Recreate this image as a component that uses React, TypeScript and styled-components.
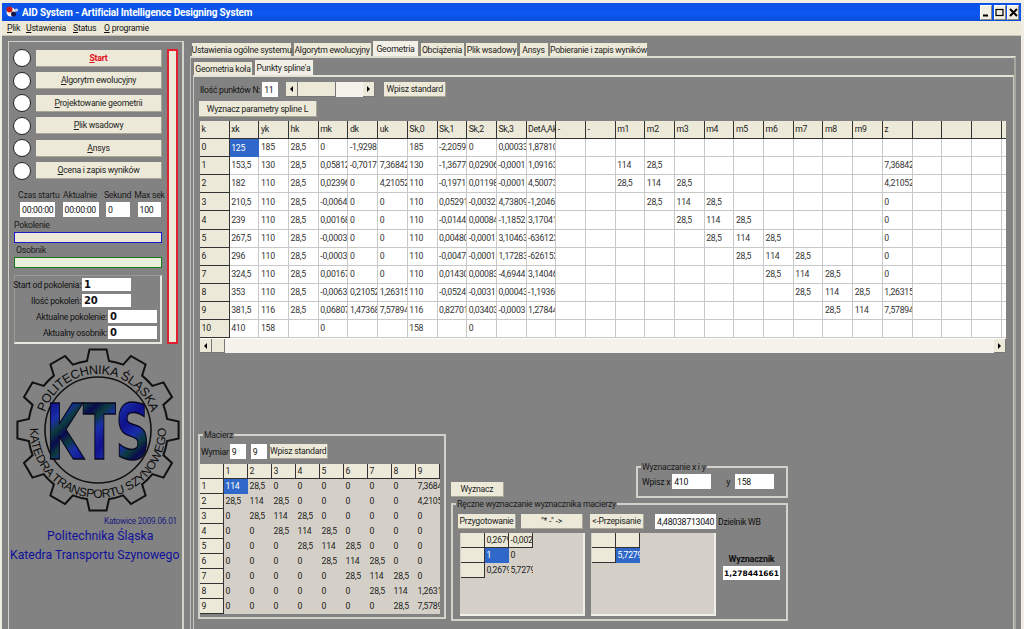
import React from "react";
import styled, { createGlobalStyle } from "styled-components";

const Global = createGlobalStyle`
  html, body { margin: 0; padding: 0; width: 1024px; height: 629px; overflow: hidden; background: #828282; }
  * { box-sizing: border-box; }
  body { font-family: Roboto, "Liberation Sans", Arial, sans-serif; font-size: 8.7px; letter-spacing: -0.25px; color: #111; }
`;

const BEIGE = "#ece9d8";
const GRAY = "#828282";
const LINE = "#d2d2ca";

const Win = styled.div`
  width: 1024px; height: 629px; display: flex; flex-direction: column;
  background: ${GRAY}; border: solid #f0eee4; border-width: 3px 3px 0 2px; overflow: hidden;
`;
const TitleBar = styled.div`
  height: 18px; flex: none; display: flex; align-items: center; padding: 0 2px 0 3px;
  background: linear-gradient(#0a50e6, #0c58f0 60%, #0a4cd8); color: #fff;
`;
const TitleText = styled.div`
  margin-left: 3px; font-size: 10px; font-weight: bold; flex: 1; white-space: nowrap; letter-spacing: -0.16px;
`;
const WinBtn = styled.div`
  width: 12px; height: 15px; margin-left: 1.5px; background: #f1eee2; border: 1px solid #fff;
  border-right-color: #8b8b80; border-bottom-color: #8b8b80;
  display: flex; align-items: center; justify-content: center; color: #000;
`;
const MenuBar = styled.div`
  height: 15px; flex: none; background: ${BEIGE}; display: flex; align-items: center; padding-left: 5px;
  border-bottom: 1px solid #c8c5b6;
`;
const MenuItem = styled.div<{ $w: number }>`
  width: ${(p) => p.$w}px; white-space: nowrap;
`;
const Body = styled.div`
  flex: 1; min-height: 0; display: flex; padding: 5px 0 0 6px;
`;

const Left = styled.div`
  width: 176px; height: 590px; flex: none; border: 1px solid ${LINE}; border-bottom: none; border-right-width: 2px;
  padding: 7px 0 0 4px;
`;
const LeftTop = styled.div`
  display: flex; align-items: flex-start; gap: 5px;
`;
const LeftCol = styled.div`
  width: 149px; display: flex; flex-direction: column;
`;
const Steps = styled.div`
  display: flex; flex-direction: column; gap: 4.5px;
`;
const Step = styled.div`
  display: flex; align-items: center; gap: 5px;
`;
const Lamp = styled.div`
  width: 18px; height: 18px; border-radius: 50%; background: #fff; border: 1.5px solid #222; flex: none;
`;
const StepBtn = styled.div<{ $red?: boolean }>`
  width: 126px; height: 17px; display: flex; align-items: center; justify-content: center;
  background: ${BEIGE}; border-right: 1px solid #a9a698; border-bottom: 1px solid #a9a698;
  color: ${(p) => (p.$red ? "#e01020" : "#222")}; font-weight: ${(p) => (p.$red ? "bold" : "normal")};
`;
const RedBar = styled.div`
  width: 11px; height: 295px; background: #ece9d8; border: 2px solid #e02030; flex: none;
`;
const TimeLabels = styled.div`
  display: flex; margin: 10.5px 0 0 5px; line-height: 10px; color: #1a1a1a;
`;
const TimeLabel = styled.div<{ $w: number }>`
  width: ${(p) => p.$w}px; white-space: nowrap; text-align: center; flex: none;
`;
const TimeFields = styled.div`
  display: flex; margin: 2px 0 0 7px; gap: 7.5px;
`;
const Field = styled.div<{ $w: number; $h?: number; $bold?: boolean }>`
  width: ${(p) => p.$w}px; height: ${(p) => p.$h ?? 15}px; background: #fff; flex: none; overflow: hidden; white-space: nowrap;
  padding: 0 0 0 2px; display: flex; align-items: center; font-size: ${(p) => (p.$bold ? 10 : 8.7)}px;
  font-weight: ${(p) => (p.$bold ? "bold" : "normal")};
  font-family: ${(p) => (p.$bold ? '"DejaVu Sans", sans-serif' : "inherit")};
`;
const SmallLabel = styled.div<{ $l: number; $t: number }>`
  margin: ${(p) => p.$t}px 0 0 ${(p) => p.$l}px; line-height: 10px; color: #1a1a1a;
`;
const Progress = styled.div<{ $c: string; $bg: string }>`
  width: 148px; height: 11px; margin: 2px 0 0 1px; border: 1.5px solid ${(p) => p.$c}; background: ${(p) => p.$bg}; flex: none;
`;
const StatBox = styled.div`
  width: 148px; height: 69px; margin: 7px 0 0 1px; border: 1px solid #9a9a94; border-right: 2px solid #e8e8e0; border-bottom: 2px solid #e8e8e0;
  display: grid; grid-template-columns: minmax(0, 1fr); padding: 2px 0 0 0; row-gap: 3px; align-content: start; flex: none;
`;
const StatRow = styled.div<{ $r: number }>`
  display: flex; justify-content: flex-end; align-items: center; gap: 1px; padding-right: ${(p) => p.$r}px; height: 13px; white-space: nowrap;
`;
const LogoWrap = styled.div`
  margin: 0 0 0 -4px; height: 172px;
`;
const DateLine = styled.div`
  margin: 0 5px 0 0; text-align: right; color: #1a1a80; font-size: 8.3px; line-height: 10px;
`;
const BigLine = styled.div<{ $t: number; $l: number; $fs: number }>`
  margin: ${(p) => p.$t}px 0 0 ${(p) => p.$l}px; color: #10109a; font-size: ${(p) => p.$fs}px; line-height: 14px; white-space: nowrap; letter-spacing: 0;
`;

const Right = styled.div`
  margin: 1px 0 0 6px; width: 826px; display: flex; flex-direction: column;
`;
const TabBar = styled.div<{ $pl: number; $h: number }>`
  display: flex; gap: 1.5px; padding-left: ${(p) => p.$pl}px; height: ${(p) => p.$h}px; align-items: flex-end; flex: none;
`;
const Tab = styled.div<{ $w: number; $on?: boolean }>`
  width: ${(p) => p.$w}px; height: ${(p) => (p.$on ? 15 : 13)}px; background: ${(p) => (p.$on ? "#f2f0e6" : BEIGE)};
  border-right: 1px solid #8c8a7c; display: flex; align-items: center; justify-content: center; white-space: nowrap; color: #222; flex: none;
`;
const TabPanel = styled.div`
  flex: 1; border: 1px solid #c0c0b8; border-bottom: none; border-right: 2px solid #a8a8a0; padding: 0 0 0 2px;
  border-top: 2px solid #dedcd0;
`;
const SubPanel = styled.div`
  height: 555px; width: 821px; border: 1px solid #c8c8c0; border-top: 2px solid #e4e2d6; border-bottom: none; padding: 4px 0 0 4px;
`;
const Controls = styled.div`
  display: flex; align-items: center; height: 17px; margin-left: 2px;
`;
const Scroll = styled.div<{ $w: number; $h: number }>`
  display: flex; width: ${(p) => p.$w}px; height: ${(p) => p.$h}px; background: #f4f2ea; flex: none; justify-content: space-between;
`;
const ScrollBtn = styled.div`
  width: 12px; height: 100%; background: ${BEIGE}; border-right: 1px solid #777; border-bottom: 1px solid #777; display: flex; align-items: center; justify-content: center; flex: none;
`;
const Arrow = styled.div<{ $left?: boolean }>`
  width: 0; height: 0; border-top: 3px solid transparent; border-bottom: 3px solid transparent;
  ${(p) => (p.$left ? "border-right: 3px solid #000;" : "border-left: 3px solid #000;")}
`;
const Thumb = styled.div<{ $w: number }>`
  width: ${(p) => p.$w}px; height: 100%; background: ${BEIGE}; border-right: 1px solid #777; border-bottom: 1px solid #777; flex: none;
`;
const ThumbGroup = styled.div`
  display: flex; flex: 1; height: 100%;
`;
const Btn = styled.div<{ $w: number; $h?: number; $mb?: number }>`
  width: ${(p) => p.$w}px; height: ${(p) => p.$h ?? 15}px; background: ${BEIGE}; border-right: 1px solid #a9a698; border-bottom: 1px solid #a9a698;
  margin-bottom: ${(p) => p.$mb ?? 0}px;
  display: flex; align-items: center; justify-content: center; white-space: nowrap; flex: none; color: #222;
`;
const Spacer = styled.div<{ $w: number }>`
  width: ${(p) => p.$w}px; flex: none;
`;
const BtnRow = styled.div`
  margin: 3px 0 4px 1px;
`;
const SheetWrap = styled.div<{ $w: number }>`
  width: ${(p) => p.$w}px; margin-left: 2px; overflow: hidden; background: #fff; height: 218px;
`;
const Sheet = styled.div<{ $cols: number; $cw: number; $rh: number; $mt?: number; $bg?: string }>`
  display: grid; grid-template-columns: repeat(${(p) => p.$cols}, ${(p) => p.$cw}px); grid-auto-rows: ${(p) => p.$rh}px;
  line-height: 1; width: max-content; margin-top: ${(p) => p.$mt ?? 0}px; background: ${(p) => p.$bg ?? "transparent"};
`;
const Cell = styled.div<{ $k: "head" | "white" | "gray" | "sel" }>`
  overflow: hidden; white-space: nowrap; padding: 0 0 0 1.5px; display: flex; align-items: center;
  ${(p) =>
    p.$k === "head"
      ? `background:${BEIGE}; border-right:1px solid #333; border-bottom:1px solid #333; color:#222;`
      : p.$k === "white"
      ? "background:#fff; border-right:1px solid #c8c8c8; border-bottom:1px solid #c8c8c8; color:#333;"
      : p.$k === "gray"
      ? "background:#d4d0c8; color:#222;"
      : "background:#2f68c8; color:#fff;"}
`;
const HScroll = styled.div`
  width: 806px; height: 14px; margin-left: 2px; background: #f4f2ea; display: flex; justify-content: space-between;
`;
const HScrollLeft = styled.div`
  display: flex; height: 100%;
`;
const Lower = styled.div`
  display: flex; margin: 77px 0 0 0; align-items: flex-start; gap: 5px;
`;
const Group = styled.fieldset<{ $w: number; $h: number }>`
  margin: 0; padding: 0; width: ${(p) => p.$w}px; height: ${(p) => p.$h}px; min-width: 0; border: 2px solid ${LINE}; flex: none;
`;
const Legend = styled.legend`
  padding: 0 1px; margin-left: 3px; line-height: 10px; color: #1a1a1a;
`;
const GroupRow = styled.div<{ $m: string }>`
  display: flex; align-items: center; margin: ${(p) => p.$m}; white-space: nowrap;
`;
const MidCol = styled.div`
  width: 337px; margin-top: 32px; display: flex; flex-direction: column; gap: 1px;
`;
const MidTop = styled.div`
  display: flex; justify-content: space-between; align-items: flex-end;
`;
const HandGrids = styled.div`
  display: flex; margin: 4px 0 0 7px; gap: 6px; align-items: flex-start;
`;
const MiniSheet = styled.div`
  width: 125px; height: 83px; background: #d4d0c8; border-right: 2px solid #f0f0ea; border-bottom: 2px solid #f0f0ea; padding-left: 1px; flex: none;
`;
const Result = styled.div`
  display: flex; flex-direction: column; align-items: center; margin: 21px 0 0 1px; gap: 2px;
`;
const ResultTitle = styled.div`
  font-weight: bold; color: #111; line-height: 10px; font-size: 9px;
`;
const ResultBox = styled.div`
  width: 57px; height: 14px; background: #fff; font-weight: bold; font-family: "DejaVu Sans", sans-serif; font-size: 7.5px; letter-spacing: 0;
  display: flex; align-items: center; justify-content: center; white-space: nowrap; color: #000;
`;

function gearPath(cx: number, cy: number, n: number, root: number, tip: number) {
  const pts: string[] = [];
  const step = (Math.PI * 2) / n;
  for (let i = 0; i < n; i++) {
    const a = -Math.PI / 2 + i * step;
    const list: [number, number][] = [
      [a - step * 0.3, root],
      [a - step * 0.2, tip],
      [a + step * 0.2, tip],
      [a + step * 0.3, root],
    ];
    list.forEach(([an, r], k) => {
      const x = (cx + Math.cos(an) * r).toFixed(1);
      const y = (cy + Math.sin(an) * r).toFixed(1);
      if (i === 0 && k === 0) pts.push(`M${x} ${y}`);
      else if (k === 0) pts.push(`A${root} ${root} 0 0 1 ${x} ${y}`);
      else pts.push(`L${x} ${y}`);
    });
  }
  pts.push(`A${root} ${root} 0 0 1 ${(cx + Math.cos(-Math.PI / 2 - step * 0.3) * root).toFixed(1)} ${(cy + Math.sin(-Math.PI / 2 - step * 0.3) * root).toFixed(1)}Z`);
  return pts.join(" ");
}

function arc(cx: number, cy: number, r: number, fromDeg: number, toDeg: number, large: 0 | 1, sweep: 0 | 1) {
  const p = (d: number) => [cx + Math.cos((d * Math.PI) / 180) * r, cy + Math.sin((d * Math.PI) / 180) * r];
  const [x1, y1] = p(fromDeg);
  const [x2, y2] = p(toDeg);
  return `M${x1.toFixed(1)} ${y1.toFixed(1)} A${r} ${r} 0 ${large} ${sweep} ${x2.toFixed(1)} ${y2.toFixed(1)}`;
}

const Logo = () => (
  <svg width="176" height="172" viewBox="0 0 176 172">
    <defs>
      <linearGradient id="kts" gradientUnits="userSpaceOnUse" x1="40" y1="60" x2="62" y2="84" spreadMethod="reflect">
        <stop offset="0" stopColor="#10108c" />
        <stop offset=".45" stopColor="#1a2ea8" />
        <stop offset=".75" stopColor="#0c3a3a" />
        <stop offset="1" stopColor="#0a0a50" />
      </linearGradient>
      <path id="topArc" d={arc(89, 86, 56, 180, 360, 0, 1)} />
      <path id="botArc" d={arc(89, 86, 68, 190, -10, 1, 0)} />
    </defs>
    <path d={gearPath(89, 86, 12, 70, 81)} fill="none" stroke="#111" strokeWidth="2" />
    <circle cx="89" cy="86" r="53" fill="none" stroke="#111" strokeWidth="1.6" />
    <text fontFamily="'Liberation Sans', sans-serif" fontSize="12.6" fill="#0c0c0c" textAnchor="middle">
      <textPath href="#topArc" startOffset="50%">POLITECHNIKA ŚLĄSKA</textPath>
    </text>
    <text fontFamily="'Liberation Sans', sans-serif" fontSize="12" fill="#0c0c0c" textAnchor="middle">
      <textPath href="#botArc" startOffset="50%">KATEDRA TRANSPORTU SZYNOWEGO</textPath>
    </text>
    <text x="37" y="115" fontFamily="'DejaVu Sans', sans-serif" fontWeight="bold" fontSize="76" textLength="104" lengthAdjust="spacingAndGlyphs" fill="url(#kts)" stroke="#06061e" strokeWidth="1.5">
      KTS
    </text>
  </svg>
);

const AppIcon = () => (
  <svg width="14" height="14" viewBox="0 0 14 14">
    <circle cx="6" cy="7" r="4.5" fill="#f2f2f2" />
    <circle cx="4.5" cy="4.5" r="3" fill="#c81818" />
    <circle cx="8.5" cy="9" r="2.5" fill="#16164a" />
    <circle cx="11.5" cy="5" r="1.5" fill="#d8d8d8" />
  </svg>
);

const WinIcon = ({ kind }: { kind: "min" | "max" | "close" }) => (
  <svg width="9" height="9" viewBox="0 0 9 9">
    {kind === "min" && <rect x="1" y="6.5" width="5" height="2" fill="#000" />}
    {kind === "max" && <rect x="1" y="1.5" width="7" height="6" fill="none" stroke="#000" strokeWidth="1.2" />}
    {kind === "close" && <path d="M1 1 L8 8 M8 1 L1 8" stroke="#000" strokeWidth="2" />}
  </svg>
);

const mainHead = ["k", "xk", "yk", "hk", "mk", "dk", "uk", "Sk,0", "Sk,1", "Sk,2", "Sk,3", "DetA,Ak", "-", "-", "m1", "m2", "m3", "m4", "m5", "m6", "m7", "m8", "m9", "z", "", "", "", ""];
const leftData: string[][] = [
  ["0", "125", "185", "28,5", "0", "-1,9298", "", "185", "-2,2059", "0", "0,00033", "1,87810"],
  ["1", "153,5", "130", "28,5", "0,05812", "-0,7017", "7,36842", "130", "-1,3677", "0,02906", "-0,0001", "1,09163"],
  ["2", "182", "110", "28,5", "0,02396", "0", "4,21052", "110", "-0,1971", "0,01198", "-0,0001", "4,50073"],
  ["3", "210,5", "110", "28,5", "-0,0064", "0", "0", "110", "0,05291", "-0,0032", "4,73809", "-1,2046"],
  ["4", "239", "110", "28,5", "0,00168", "0", "0", "110", "-0,0144", "0,00084", "-1,1852", "3,17041"],
  ["5", "267,5", "110", "28,5", "-0,0003", "0", "0", "110", "0,00480", "-0,0001", "3,10463", "-636123"],
  ["6", "296", "110", "28,5", "-0,0003", "0", "0", "110", "-0,0047", "-0,0001", "1,17283", "-626152"],
  ["7", "324,5", "110", "28,5", "0,00167", "0", "0", "110", "0,01430", "0,00083", "-4,6944", "3,14046"],
  ["8", "353", "110", "28,5", "-0,0063", "0,21052", "1,26315", "110", "-0,0524", "-0,0031", "0,00043", "-1,1936"],
  ["9", "381,5", "116", "28,5", "0,06807", "1,47368", "7,57894", "116", "0,82701", "0,03403", "-0,0003", "1,27844"],
  ["10", "410", "158", "", "0", "", "", "158", "", "0", "", ""],
];
const zVals = ["", "7,36842", "4,21052", "0", "0", "0", "0", "0", "1,26315", "7,57894", ""];

const mainRow = (r: number) => {
  const row = [...leftData[r], "", ""];
  for (let m = 1; m <= 9; m++) {
    row.push(r >= 1 && r <= 9 ? (m === r ? "114" : Math.abs(m - r) === 1 ? "28,5" : "") : "");
  }
  row.push(zVals[r], "", "", "", "");
  return row;
};

const matZ = ["7,36842", "4,21052", "0", "0", "0", "0", "0", "1,26315", "7,57894"];
const matRow = (r: number) => {
  const out: string[] = [];
  for (let m = 1; m <= 8; m++) out.push(m === r ? "114" : Math.abs(m - r) === 1 ? "28,5" : "0");
  out.push(matZ[r - 1]);
  return out;
};

export default function App() {
  return (
    <Win>
      <Global />
      <TitleBar>
        <AppIcon />
        <TitleText>AID System - Artificial Intelligence Designing System</TitleText>
        <WinBtn><WinIcon kind="min" /></WinBtn>
        <WinBtn><WinIcon kind="max" /></WinBtn>
        <WinBtn><WinIcon kind="close" /></WinBtn>
      </TitleBar>
      <MenuBar>
        <MenuItem $w={19}><u>P</u>lik</MenuItem>
        <MenuItem $w={47}><u>U</u>stawienia</MenuItem>
        <MenuItem $w={31}><u>S</u>tatus</MenuItem>
        <MenuItem $w={50}><u>O</u> programie</MenuItem>
      </MenuBar>
      <Body>
        <Left>
          <LeftTop>
            <LeftCol>
              <Steps>
                <Step><Lamp /><StepBtn $red><span><u>S</u>tart</span></StepBtn></Step>
                <Step><Lamp /><StepBtn><span><u>A</u>lgorytm ewolucyjny</span></StepBtn></Step>
                <Step><Lamp /><StepBtn><span><u>P</u>rojektowanie geometrii</span></StepBtn></Step>
                <Step><Lamp /><StepBtn><span><u>P</u>lik wsadowy</span></StepBtn></Step>
                <Step><Lamp /><StepBtn><span><u>A</u>nsys</span></StepBtn></Step>
                <Step><Lamp /><StepBtn><span><u>O</u>cena i zapis wyników</span></StepBtn></Step>
              </Steps>
              <TimeLabels>
                <TimeLabel $w={39}>Czas startu</TimeLabel>
                <TimeLabel $w={46}>Aktualnie</TimeLabel>
                <TimeLabel $w={29}>Sekund</TimeLabel>
                <TimeLabel $w={35}>Max sek</TimeLabel>
              </TimeLabels>
              <TimeFields>
                <Field $w={35}>00:00:00</Field>
                <Field $w={36}>00:00:00</Field>
                <Field $w={24}>0</Field>
                <Field $w={23}>100</Field>
              </TimeFields>
              <SmallLabel $l={1} $t={3}>Pokolenie</SmallLabel>
              <Progress $c="#1a1ac8" $bg="#ece9d8" />
              <SmallLabel $l={3} $t={2}>Osobnik</SmallLabel>
              <Progress $c="#1a7a1a" $bg="#e8f0dc" />
              <StatBox>
                <StatRow $r={29}>Start od pokolenia:<Field $w={49} $h={13} $bold>1</Field></StatRow>
                <StatRow $r={29}>Ilość pokoleń:<Field $w={49} $h={13} $bold>20</Field></StatRow>
                <StatRow $r={3}>Aktualne pokolenie:<Field $w={49} $h={13} $bold>0</Field></StatRow>
                <StatRow $r={3}>Aktualny osobnik:<Field $w={49} $h={13} $bold>0</Field></StatRow>
              </StatBox>
            </LeftCol>
            <RedBar />
          </LeftTop>
          <LogoWrap><Logo /></LogoWrap>
          <DateLine>Katowice 2009.06.01</DateLine>
          <BigLine $t={3} $l={34} $fs={12.3}>Politechnika Śląska</BigLine>
          <BigLine $t={5} $l={-3} $fs={12.2}>Katedra Transportu Szynowego</BigLine>
        </Left>
        <Right>
          <TabBar $pl={2} $h={14}>
            <Tab $w={100}>Ustawienia ogólne systemu</Tab>
            <Tab $w={78}>Algorytm ewolucyjny</Tab>
            <Tab $w={46} $on>Geometria</Tab>
            <Tab $w={44}>Obciążenia</Tab>
            <Tab $w={52}>Plik wsadowy</Tab>
            <Tab $w={29}>Ansys</Tab>
            <Tab $w={98}>Pobieranie i zapis wyników</Tab>
          </TabBar>
          <TabPanel>
            <TabBar $pl={1} $h={17}>
              <Tab $w={59}>Geometria koła</Tab>
              <Tab $w={59} $on>Punkty spline'a</Tab>
            </TabBar>
            <SubPanel>
              <Controls>
                Ilość punktów N:
                <Spacer $w={2} />
                <Field $w={16}>11</Field>
                <Spacer $w={8} />
                <Scroll $w={89} $h={15}>
                  <ScrollBtn><Arrow $left /></ScrollBtn>
                  <ThumbGroup><Thumb $w={38} /></ThumbGroup>
                  <ScrollBtn><Arrow /></ScrollBtn>
                </Scroll>
                <Spacer $w={9} />
                <Btn $w={62}>Wpisz standard</Btn>
              </Controls>
              <BtnRow><Btn $w={118} $h={16}>Wyznacz parametry spline L</Btn></BtnRow>
              <SheetWrap $w={806}>
                <Sheet $cols={28} $cw={29.7} $rh={18.1}>
                  {mainHead.map((h, i) => <Cell key={i} $k="head">{h}</Cell>)}
                  {leftData.map((_, r) =>
                    mainRow(r).map((v, c) => (
                      <Cell key={`${r}-${c}`} $k={c === 0 ? "head" : r === 0 && c === 1 ? "sel" : "white"}>{v}</Cell>
                    ))
                  )}
                </Sheet>
              </SheetWrap>
              <HScroll>
                <HScrollLeft>
                  <ScrollBtn><Arrow $left /></ScrollBtn>
                  <Thumb $w={13} />
                </HScrollLeft>
                <ScrollBtn><Arrow /></ScrollBtn>
              </HScroll>
              <Lower>
                <Group $w={248} $h={189}>
                  <Legend>Macierz</Legend>
                  <GroupRow $m="4px 0 0 1px">
                    Wymiar
                    <Spacer $w={1} />
                    <Field $w={16}>9</Field>
                    <Spacer $w={5} />
                    <Field $w={16}>9</Field>
                    <Spacer $w={3} />
                    <Btn $w={58}>Wpisz standard</Btn>
                  </GroupRow>
                  <Sheet $cols={10} $cw={24} $rh={15} $mt={5} $bg="#d4d0c8">
                    {["", "1", "2", "3", "4", "5", "6", "7", "8", "9"].map((h, i) => <Cell key={i} $k="head">{h}</Cell>)}
                    {[1, 2, 3, 4, 5, 6, 7, 8, 9].map((r) => (
                      <React.Fragment key={r}>
                        <Cell $k="head">{r}</Cell>
                        {matRow(r).map((v, c) => (
                          <Cell key={c} $k={r === 1 && c === 0 ? "sel" : "gray"}>{v}</Cell>
                        ))}
                      </React.Fragment>
                    ))}
                  </Sheet>
                </Group>
                <MidCol>
                  <MidTop>
                    <Btn $w={53} $h={15} $mb={1}>Wyznacz</Btn>
                    <Group $w={152} $h={36}>
                      <Legend>Wyznaczanie x i y</Legend>
                      <GroupRow $m="2px 0 0 4px">
                        Wpisz x
                        <Spacer $w={2} />
                        <Field $w={39}>410</Field>
                        <Spacer $w={15} />
                        y
                        <Spacer $w={5} />
                        <Field $w={39}>158</Field>
                      </GroupRow>
                    </Group>
                  </MidTop>
                  <Group $w={337} $h={122}>
                    <Legend>Ręczne wyznaczanie wyznacznika  macierzy</Legend>
                    <GroupRow $m="5px 0 0 5px">
                      <Btn $w={58}>Przygotowanie</Btn>
                      <Spacer $w={5} />
                      <Btn $w={62}>"* -" -&gt;</Btn>
                      <Spacer $w={7} />
                      <Btn $w={54}>&lt;-Przepisanie</Btn>
                      <Spacer $w={11} />
                      <Field $w={61}>4,48038713040</Field>
                      <Spacer $w={2} />
                      Dzielnik WB
                    </GroupRow>
                    <HandGrids>
                      <MiniSheet>
                        <Sheet $cols={3} $cw={24} $rh={15}>
                          <Cell $k="head" /><Cell $k="head">0,2679</Cell><Cell $k="head">-0,0027</Cell>
                          <Cell $k="head" /><Cell $k="sel">1</Cell><Cell $k="gray">0</Cell>
                          <Cell $k="head" /><Cell $k="gray">0,2679</Cell><Cell $k="gray">5,7279</Cell>
                        </Sheet>
                      </MiniSheet>
                      <MiniSheet>
                        <Sheet $cols={2} $cw={24} $rh={15}>
                          <Cell $k="head" /><Cell $k="head" />
                          <Cell $k="head" /><Cell $k="sel">5,7279</Cell>
                        </Sheet>
                      </MiniSheet>
                      <Result>
                        <ResultTitle>Wyznacznik</ResultTitle>
                        <ResultBox>1,278441661</ResultBox>
                      </Result>
                    </HandGrids>
                  </Group>
                </MidCol>
              </Lower>
            </SubPanel>
          </TabPanel>
        </Right>
      </Body>
    </Win>
  );
}
